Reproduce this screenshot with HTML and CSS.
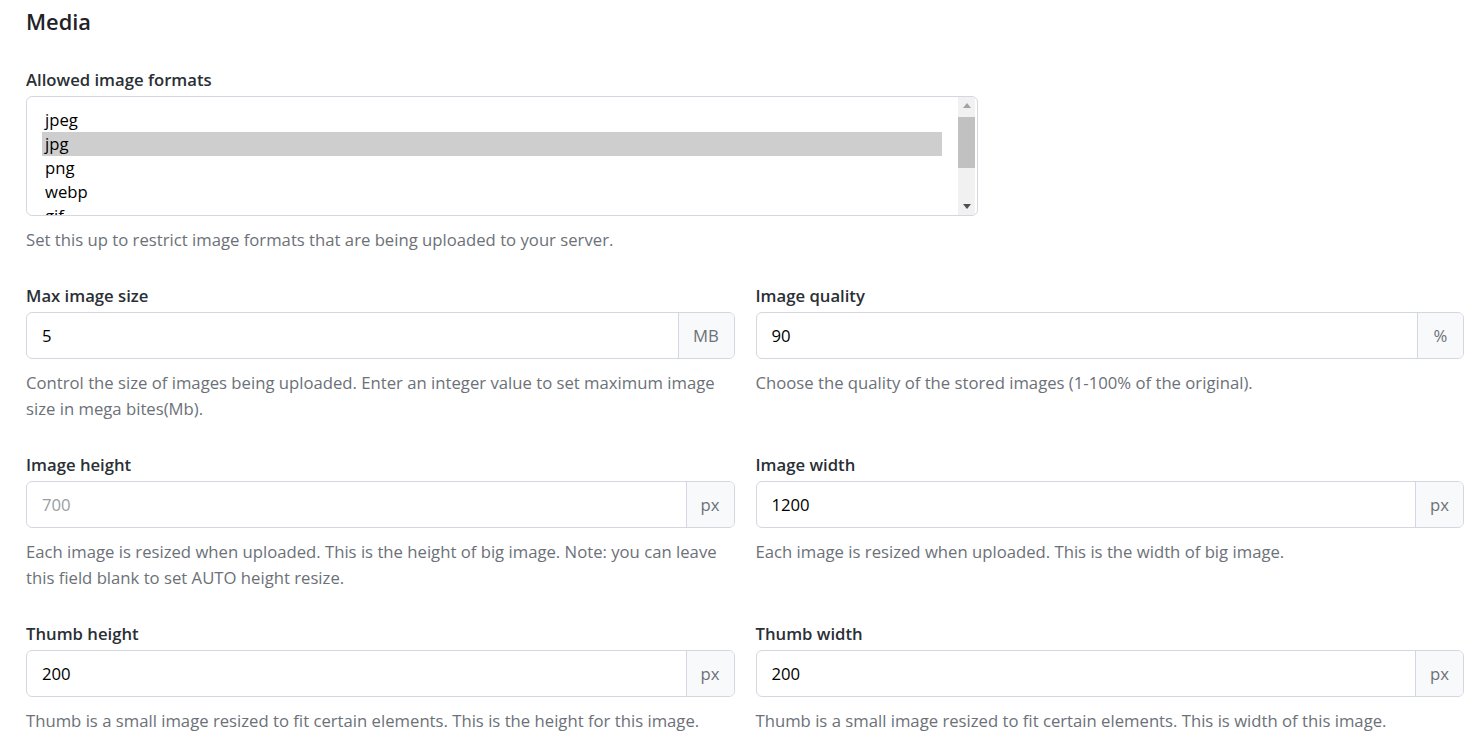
FILE: index.html
```html
<!DOCTYPE html>
<html>
<head>
<meta charset="utf-8">
<link rel="stylesheet" href="styles.css">
</head>
<body>
<div class="page">
  <h2 class="title">Media</h2>

  <div class="field formats">
    <div class="label">Allowed image formats</div>
    <div class="listbox">
      <div class="options">
        <div class="opt">jpeg</div>
        <div class="opt selected">jpg</div>
        <div class="opt">png</div>
        <div class="opt">webp</div>
        <div class="opt">gif</div>
      </div>
      <div class="scrollbar">
        <div class="sb-btn"><svg width="8" height="5" viewBox="0 0 8 5"><path d="M0 5 L4 0 L8 5 Z" fill="#a3a3a3"/></svg></div>
        <div class="sb-track"><div class="sb-thumb"></div></div>
        <div class="sb-btn"><svg width="8" height="5" viewBox="0 0 8 5"><path d="M0 0 L8 0 L4 5 Z" fill="#505050"/></svg></div>
      </div>
    </div>
    <div class="help">Set this up to restrict image formats that are being uploaded to your server.</div>
  </div>

  <div class="grid">
    <div class="field">
      <div class="label">Max image size</div>
      <div class="group"><div class="input">5</div><div class="addon mb">MB</div></div>
      <div class="help">Control the size of images being uploaded. Enter an integer value to set maximum image size in mega bites(Mb).</div>
    </div>
    <div class="field">
      <div class="label">Image quality</div>
      <div class="group"><div class="input">90</div><div class="addon pct">%</div></div>
      <div class="help">Choose the quality of the stored images (1-100% of the original).</div>
    </div>

    <div class="field">
      <div class="label">Image height</div>
      <div class="group"><div class="input placeholder">700</div><div class="addon">px</div></div>
      <div class="help">Each image is resized when uploaded. This is the height of big image. Note: you can leave this field blank to set AUTO height resize.</div>
    </div>
    <div class="field">
      <div class="label">Image width</div>
      <div class="group"><div class="input">1200</div><div class="addon">px</div></div>
      <div class="help">Each image is resized when uploaded. This is the width of big image.</div>
    </div>

    <div class="field">
      <div class="label">Thumb height</div>
      <div class="group"><div class="input">200</div><div class="addon">px</div></div>
      <div class="help">Thumb is a small image resized to fit certain elements. This is the height for this image.</div>
    </div>
    <div class="field">
      <div class="label">Thumb width</div>
      <div class="group"><div class="input">200</div><div class="addon">px</div></div>
      <div class="help">Thumb is a small image resized to fit certain elements. This is width of this image.</div>
    </div>
  </div>
</div>
</body>
</html>
```

FILE: styles.css
```css
* { box-sizing: border-box; }
body {
  margin: 0;
  background: #fff;
  font-family: "Open Sans", "Noto Sans", "Liberation Sans", sans-serif;
  color: #212529;
}
.page {
  padding: 9px 13px 0 26px;
}
.title {
  margin: 0;
  font-size: 21.8px;
  line-height: 26px;
  font-weight: 600;
  color: #1f2328;
}
.formats {
  margin-top: 33px;
  width: 952px;
}
.label {
  font-size: 16.7px;
  line-height: 24px;
  font-weight: 600;
  color: #2b2f36;
  margin-bottom: 4px;
}
.listbox {
  display: flex;
  height: 120px;
  border: 1px solid #d5d7e0;
  border-radius: 6px;
  overflow: hidden;
  background: #fff;
}
.options {
  flex: 1;
  padding: 11px 16px 0 15px;
  overflow: hidden;
}
.opt {
  height: 24px;
  line-height: 24px;
  font-size: 16.7px;
  padding-left: 3px;
  color: #000;
}
.opt.selected { background: #cecece; }
.scrollbar {
  width: 17px;
  margin-right: 2px;
  display: flex;
  flex-direction: column;
  background: #f1f1f1;
}
.sb-btn {
  height: 17px;
  display: flex;
  align-items: center;
  justify-content: center;
}
.sb-track { flex: 1; padding: 3px 0 30px; }
.sb-thumb { height: 100%; background: #c1c1c1; }
.help {
  font-size: 16.7px;
  line-height: 26px;
  color: #6c7178;
  margin-top: 11px;
}
.grid {
  margin-top: 31px;
  display: grid;
  grid-template-columns: 1fr 1fr;
  column-gap: 21px;
  row-gap: 31px;
}
.group {
  display: flex;
  height: 47px;
  border: 1px solid #d5d7e0;
  border-radius: 6px;
  overflow: hidden;
}
.input {
  flex: 1;
  padding-left: 15px;
  display: flex;
  align-items: center;
  font-size: 16.7px;
  color: #000;
}
.input.placeholder { color: #9a9da2; }
.addon {
  width: 48px;
  display: flex;
  align-items: center;
  justify-content: center;
  background: #f8f9fb;
  border-left: 1px solid #d5d7e0;
  font-size: 16.7px;
  color: #6c7178;
}
.addon.mb { width: 56px; }
.addon.pct { width: 46px; }
.field .help { margin-top: 11px; }
```
